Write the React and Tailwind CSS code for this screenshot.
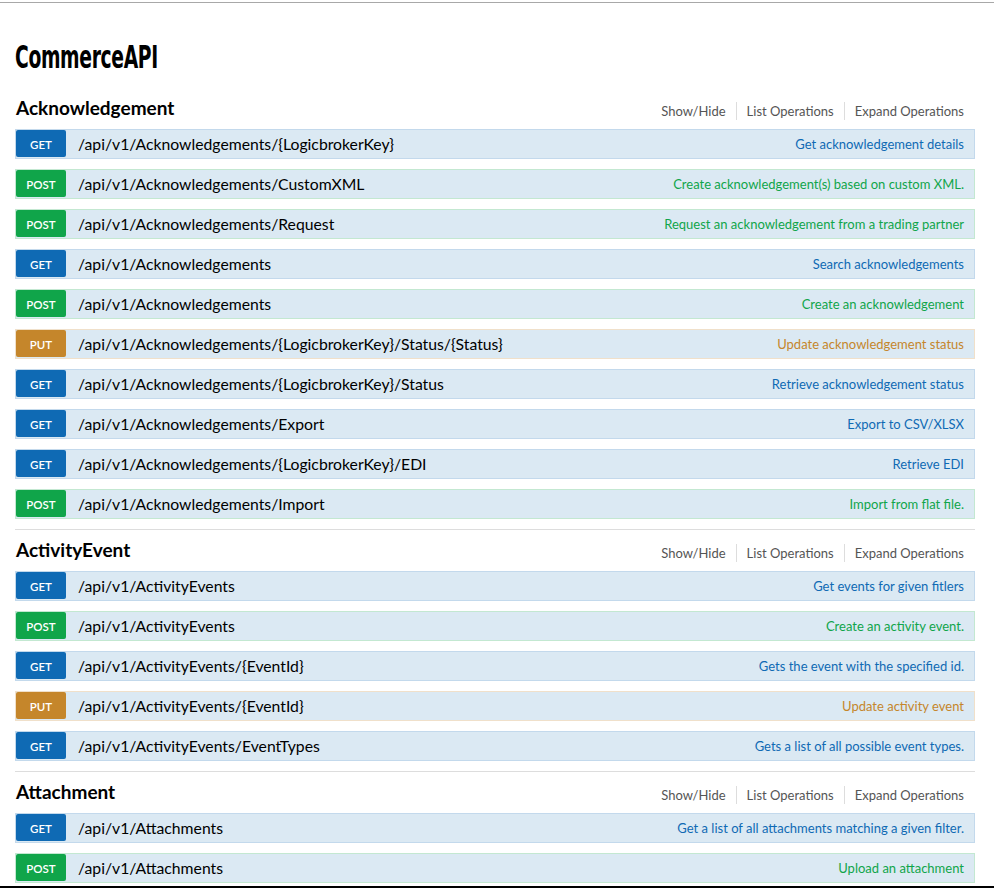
import React from "react";

// method colours -------------------------------------------------------------------------------
const METHOD = {
  GET: { badge: "bg-[#0f6ab4]", border: "border-[#c3d9ec]", text: "text-[#0f6ab4]" },
  POST: { badge: "bg-[#10a54a]", border: "border-[#c3e8d1]", text: "text-[#10a54a]" },
  PUT: { badge: "bg-[#c5862b]", border: "border-[#f0e0ca]", text: "text-[#c5862b]" },
};

const SECTIONS = [
  {
    name: "Acknowledgement",
    ops: [
      ["GET", "/api/v1/Acknowledgements/{LogicbrokerKey}", "Get acknowledgement details"],
      ["POST", "/api/v1/Acknowledgements/CustomXML", "Create acknowledgement(s) based on custom XML."],
      ["POST", "/api/v1/Acknowledgements/Request", "Request an acknowledgement from a trading partner"],
      ["GET", "/api/v1/Acknowledgements", "Search acknowledgements"],
      ["POST", "/api/v1/Acknowledgements", "Create an acknowledgement"],
      ["PUT", "/api/v1/Acknowledgements/{LogicbrokerKey}/Status/{Status}", "Update acknowledgement status"],
      ["GET", "/api/v1/Acknowledgements/{LogicbrokerKey}/Status", "Retrieve acknowledgement status"],
      ["GET", "/api/v1/Acknowledgements/Export", "Export to CSV/XLSX"],
      ["GET", "/api/v1/Acknowledgements/{LogicbrokerKey}/EDI", "Retrieve EDI"],
      ["POST", "/api/v1/Acknowledgements/Import", "Import from flat file."],
    ],
  },
  {
    name: "ActivityEvent",
    ops: [
      ["GET", "/api/v1/ActivityEvents", "Get events for given fitlers"],
      ["POST", "/api/v1/ActivityEvents", "Create an activity event."],
      ["GET", "/api/v1/ActivityEvents/{EventId}", "Gets the event with the specified id."],
      ["PUT", "/api/v1/ActivityEvents/{EventId}", "Update activity event"],
      ["GET", "/api/v1/ActivityEvents/EventTypes", "Gets a list of all possible event types."],
    ],
  },
  {
    name: "Attachment",
    ops: [
      ["GET", "/api/v1/Attachments", "Get a list of all attachments matching a given filter."],
      ["POST", "/api/v1/Attachments", "Upload an attachment"],
    ],
  },
];

const Operation = ({ method, path, summary }) => {
  const m = METHOD[method];
  return (
    <div className={`flex items-center h-[30px] mb-[10px] border ${m.border} bg-[#dbe9f3]`}>
      <span
        className={`${m.badge} w-[50px] h-[27px] self-start rounded-[2px] flex items-center justify-center text-white text-[11.5px] font-semibold pt-[3px]`}
      >
        {method}
      </span>
      <span className="ml-[12px] text-[15.75px] text-black flex-1">{path}</span>
      <span className={`${m.text} text-[13px] pr-[10px] pt-[2px]`}>{summary}</span>
    </div>
  );
};

const Section = ({ name, ops, first }) => (
  <section className={first ? "" : "border-t border-[#dddddd]"}>
    <div className="flex items-center justify-between h-[41px]">
      <h2 className="pl-px text-[19px] font-bold text-black">{name}</h2>
      <ul className="flex items-center text-[13px] leading-[18px] text-[#555555] pr-[11px] pt-[4px]">
        <li className="pr-[10px]">Show/Hide</li>
        <li className="px-[10px] border-l border-[#dddddd]">List Operations</li>
        <li className="pl-[10px] border-l border-[#dddddd]">Expand Operations</li>
      </ul>
    </div>
    {ops.map(([method, path, summary]) => (
      <Operation key={method + path} method={method} path={path} summary={summary} />
    ))}
  </section>
);

export default function App() {
  return (
    <div className="h-[888px] flex flex-col overflow-hidden bg-white font-['Lato','Liberation_Sans',sans-serif]">
      <div className="h-[2px]" />
      <div className="h-px bg-[#a8a8a8]" />
      <main className="flex-1 overflow-hidden w-[960px] ml-[15px]">
        <h1 className="mt-[39px] h-[30px] mb-[16px] leading-[30px] text-[32px] font-bold tracking-[-0.5px] text-black font-['DejaVu_Sans_Condensed','DejaVu_Sans',sans-serif] origin-left scale-x-[0.65] whitespace-nowrap">
          CommerceAPI
        </h1>
        {SECTIONS.map((s, i) => (
          <Section key={s.name} name={s.name} ops={s.ops} first={i === 0} />
        ))}
      </main>
      <div className="h-[2px] bg-black" />
    </div>
  );
}
